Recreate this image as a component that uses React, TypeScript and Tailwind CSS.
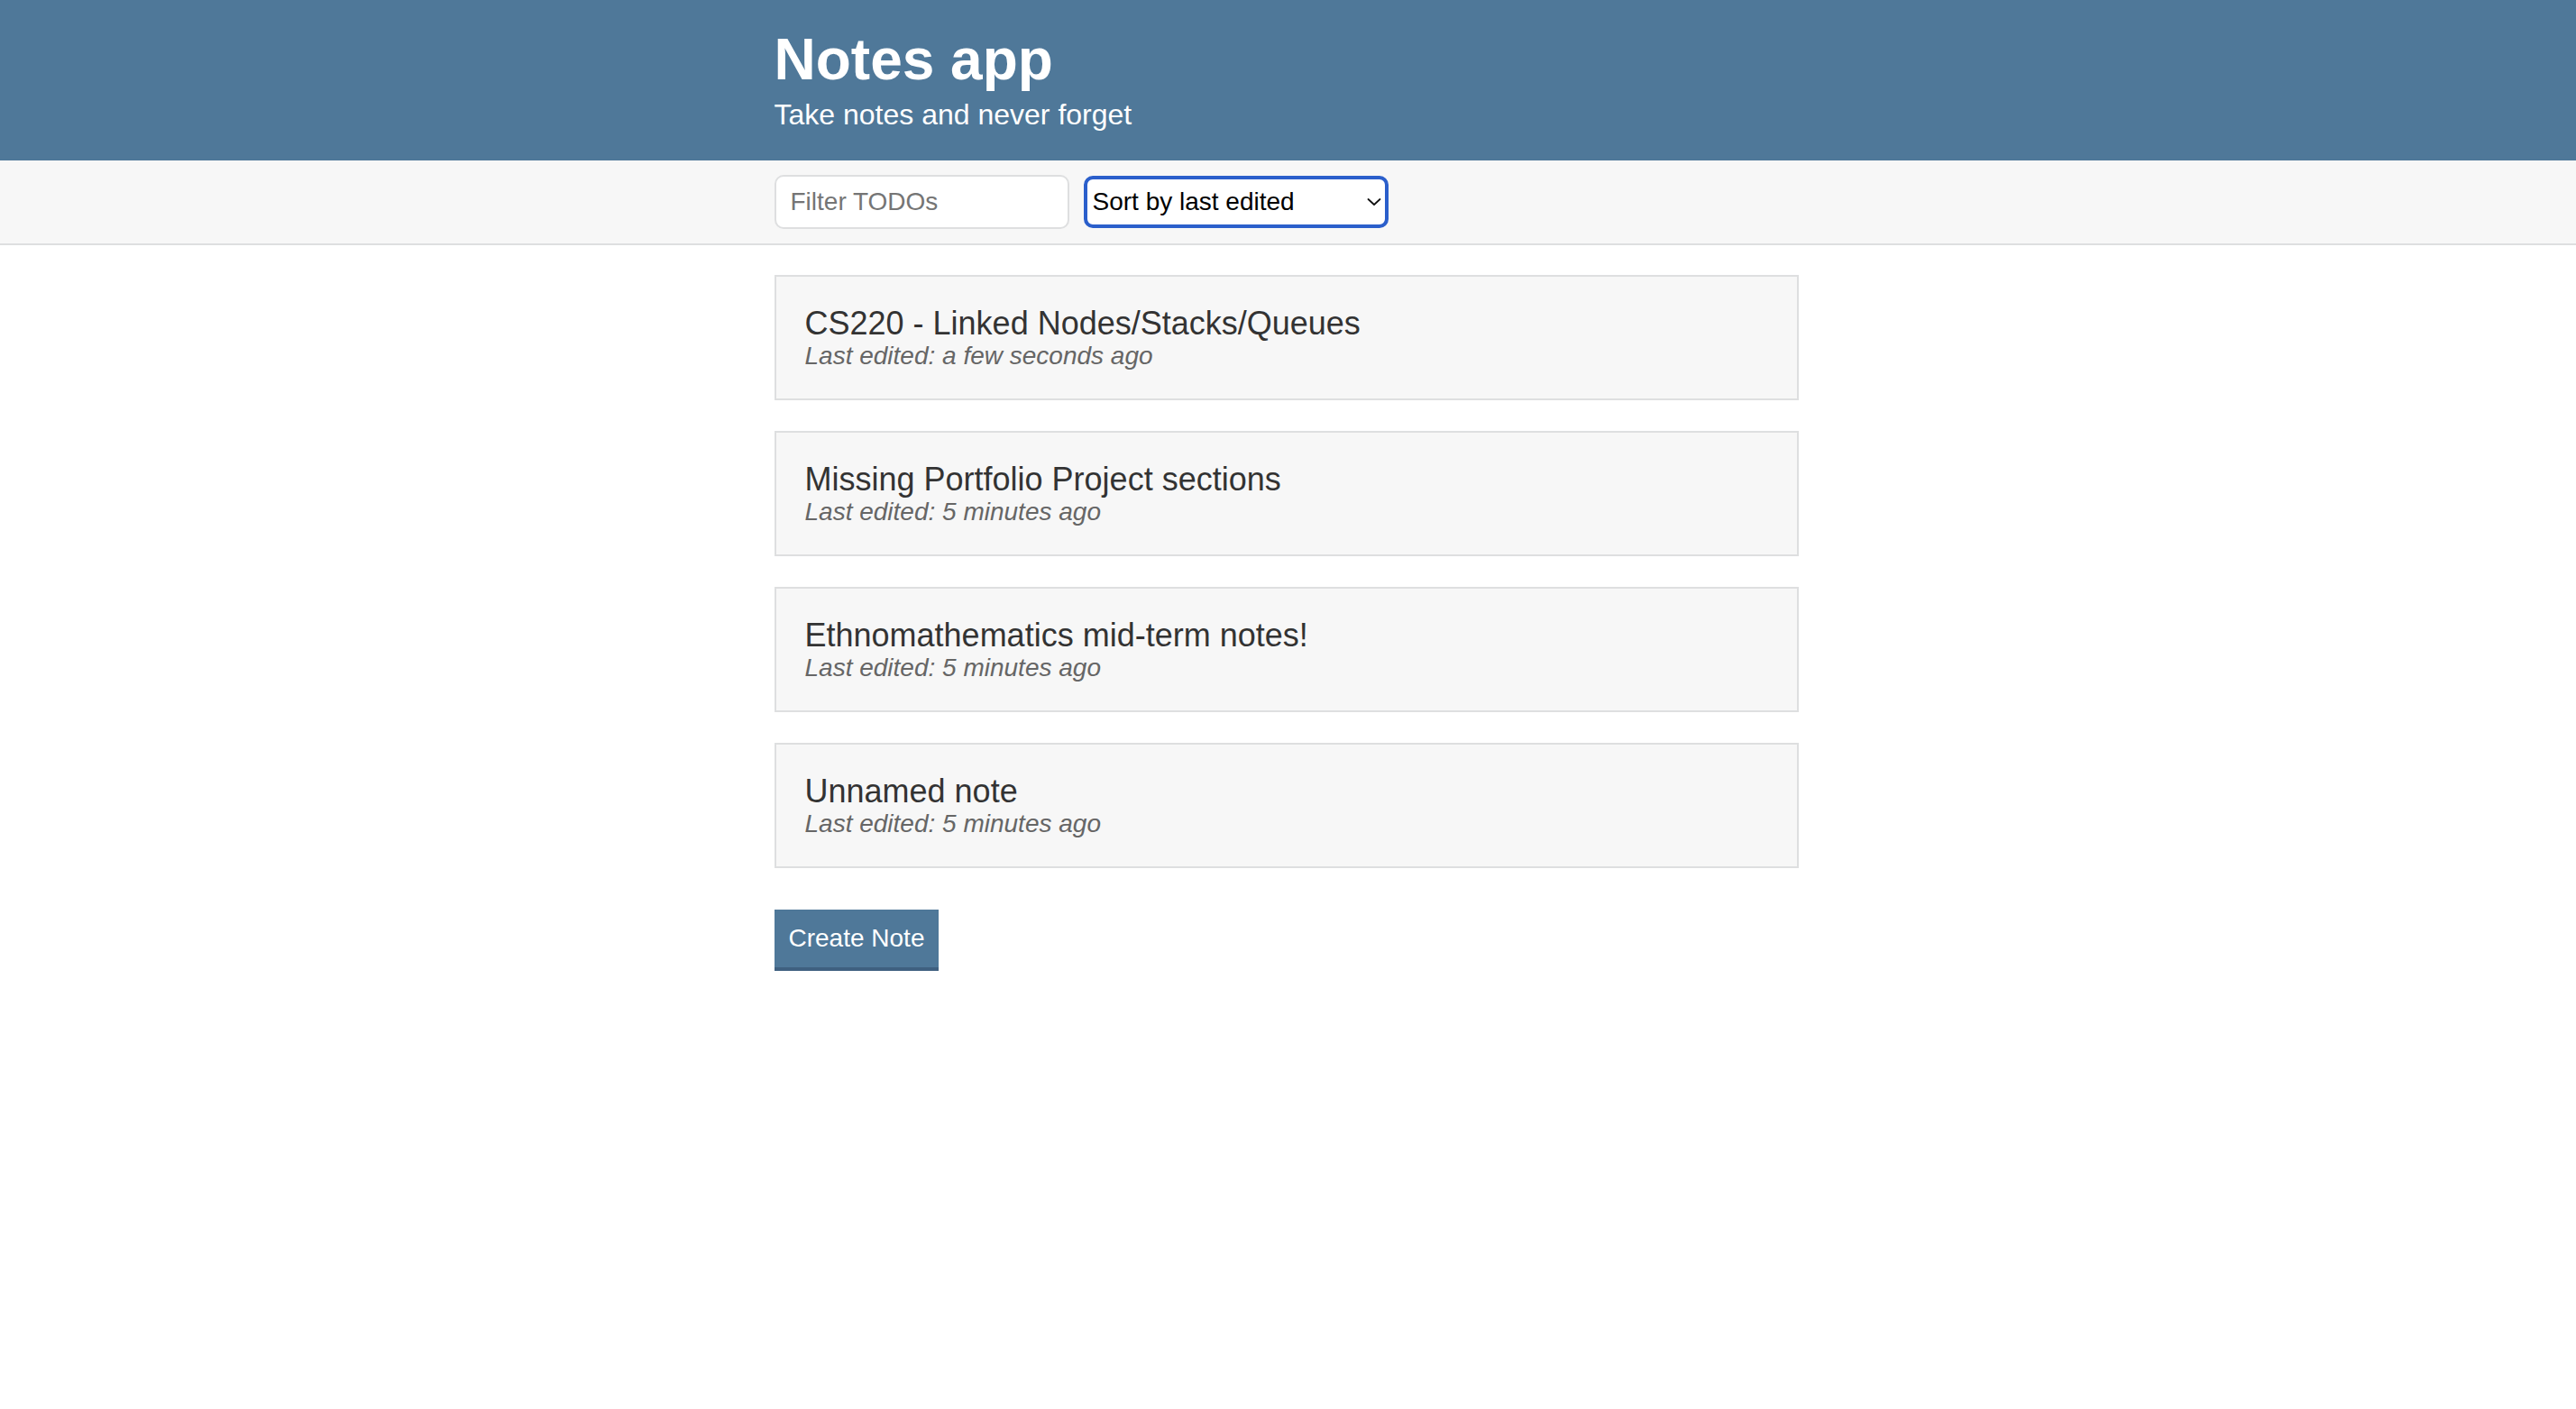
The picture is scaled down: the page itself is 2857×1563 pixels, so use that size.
const notes = [
  { title: "CS220 - Linked Nodes/Stacks/Queues", edited: "a few seconds ago" },
  { title: "Missing Portfolio Project sections", edited: "5 minutes ago" },
  { title: "Ethnomathematics mid-term notes!", edited: "5 minutes ago" },
  { title: "Unnamed note", edited: "5 minutes ago" },
]

function NoteItem({ title, edited }: { title: string; edited: string }) {
  return (
    <a href="#" className="block border-2 border-[#dedfe0] bg-[#f7f7f7] p-8 text-[#333333]">
      <h3 className="text-[36px] leading-[40px] font-normal">{title}</h3>
      <p className="text-[28px] leading-[31px] font-light italic text-[#666666]">Last edited: {edited}</p>
    </a>
  )
}

export default function App() {
  return (
    <div className="min-h-screen bg-white font-['Liberation_Sans',Arial,sans-serif] text-[#333333]">
      <header className="bg-[#4f7899] py-8 text-white">
        <div className="mx-auto w-[1200px] pl-[30px] pr-[34px]">
          <h1 className="mb-2 text-[64px] leading-[68px] font-bold">Notes app</h1>
          <h2 className="text-[32px] leading-[38px] font-light">Take notes and never forget</h2>
        </div>
      </header>

      <div className="border-b-2 border-[#dedfe0] bg-[#f7f7f7] py-4">
        <div className="mx-auto flex w-[1200px] items-center gap-4 pl-[30px] pr-[34px]">
          <input
            type="text"
            placeholder="Filter TODOs"
            className="h-[60px] w-[327px] rounded-[10px] border-2 border-[#dedfe0] bg-white px-4 text-[28px] font-light text-[#333333] outline-none placeholder:text-[#757575]"
          />
          <div className="relative">
            <select className="h-[58px] w-[338px] appearance-none rounded-[10px] border-[4px] border-[#2b5fcb] bg-white pl-[6px] pr-10 text-[28px] text-black outline-none">
              <option>Sort by last edited</option>
              <option>Sort by recently created</option>
              <option>Sort alphabetically</option>
            </select>
            <svg
              className="pointer-events-none absolute right-[8px] top-1/2 h-[10px] w-[16px] -translate-y-1/2"
              viewBox="0 0 16 10"
              fill="none"
              stroke="#111111"
              strokeWidth="1.8"
              strokeLinecap="round"
              strokeLinejoin="round"
            >
              <path d="M1.5 2l6.5 6 6.5-6" />
            </svg>
          </div>
        </div>
      </div>

      <main className="mx-auto w-[1200px] pl-[30px] pr-[34px] pt-[33px]">
        <div className="flex flex-col gap-[34px]">
          {notes.map((note, i) => (
            <NoteItem key={`note-${i}`} title={note.title} edited={note.edited} />
          ))}
        </div>
        <button className="mt-[46px] border-b-4 border-[#3f6080] bg-[#4f7899] px-4 py-4 text-[28px] leading-[32px] text-white">
          Create Note
        </button>
      </main>
    </div>
  )
}
